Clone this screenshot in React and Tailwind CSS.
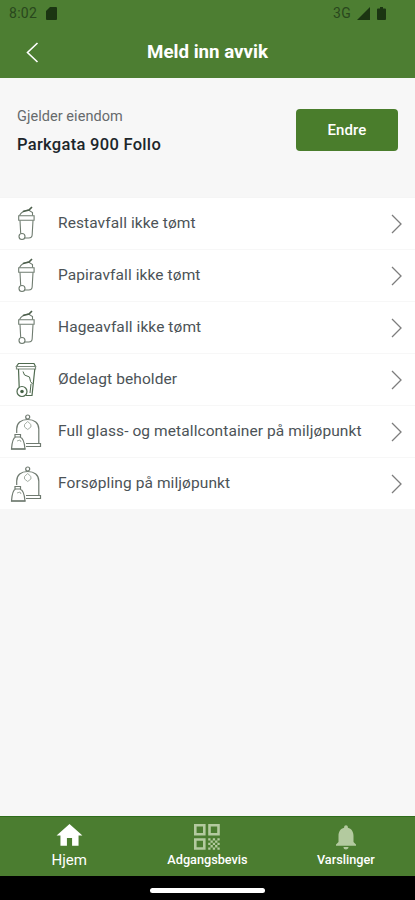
import React, { useState } from "react";
import { MdHome, MdNotifications } from "react-icons/md";

function BinIcon() {
  return (
    <svg width="30" height="36" viewBox="0 0 30 36" fill="none" stroke="#6f7c70" strokeWidth="1.1">
      <path d="M8.5 9.5C10 6.5 13 4.5 17.5 4L21.500 6.500v3" />
      <path d="M12 5.500 18 4 21 1" stroke="#4d5f4c" strokeWidth="1.7" />
      <path d="M7.700 9.700h15.400v4.500H7.700z" />
      <path d="M9 14.500 9.700 27.500M22 14.500l-.8 14a3.500 3.500 0 0 1-3.500 3.500H14" />
      <circle cx="11" cy="30.500" r="3" />
    </svg>
  );
}

function BrokenBinIcon() {
  return (
    <svg width="30" height="36" viewBox="0 0 30 36" fill="none" stroke="#4f6a4f" strokeWidth="1.2">
      <path d="M7.500 1.500h15.500l1.500 3H5.500z" />
      <path d="M5.500 4.500h19v2.500h-19z" stroke="#7d8c7d" />
      <path d="M7.500 7l.7 18M23.800 7 21 33.500h-6" />
      <path d="M12 9.500l1.500 3.500 5 2 1 4.500 2 2.500" strokeWidth="1" />
      <path d="M20 22l-1 9" strokeWidth="1" />
      <circle cx="11" cy="29.500" r="5" />
      <circle cx="11" cy="29.500" r="1.2" fill="#2f4f2f" />
    </svg>
  );
}

function ContainerIcon() {
  return (
    <svg width="36" height="38" viewBox="0 0 36 38" fill="none" stroke="#6f7a70" strokeWidth="1.2">
      <circle cx="19.700" cy="4" r="2" />
      <path d="M8.700 20v-4C8.700 10 13 6.500 19.700 6.500S30.800 10 30.800 16v14" />
      <path d="M18 30.500h14.500v3H18" />
      <path d="M19.700 8.500 16.500 11.500v2.500l3.200 2.500 3.200-2.500v-2.500z" stroke="#9ba59b" strokeWidth="0.9" />
      <path d="M7 21.500h5.500v2.500H7zM7.500 24c-2.500 1-3.500 5-4 12h13.500c-.5-7-2-11-5-12" />
      <path d="M9 28l3-1 1 2" stroke="#9ba59b" strokeWidth="0.9" />
      <path d="M3 36h14.500" strokeWidth="1.4" />
    </svg>
  );
}

function QrIcon() {
  return (
    <svg width="28" height="28" viewBox="0 0 28 28">
      <g fill="none" stroke="#b3ca9f" strokeWidth="2.600">
        <path d="M2.300 2.300h9v9h-9zM16.500 2.300h9v9h-9zM2.300 16.500h9v9h-9z" />
      </g>
      <path
        fill="#b3ca9f"
        d="M15.200 15.200h2.300v2.300h-2.300zM19.800 15.200h2.300v2.300h-2.300zM24.400 15.200h2.300v2.300h-2.300zM17.500 17.500h2.300v2.300h-2.300zM22.100 17.500h2.300v2.300h-2.300zM15.200 19.800h2.300v2.300h-2.300zM19.800 19.800h2.300v2.300h-2.300zM24.400 19.800h2.300v2.300h-2.300zM17.500 22.100h2.300v2.300h-2.300zM22.100 22.100h2.300v2.300h-2.300zM15.200 24.400h2.300v2.300h-2.300zM19.800 24.400h2.300v2.300h-2.300zM24.400 24.400h2.300v2.300h-2.300z"
      />
    </svg>
  );
}

const items = [
  { title: "Restavfall ikke tømt", icon: <BinIcon /> },
  { title: "Papiravfall ikke tømt", icon: <BinIcon /> },
  { title: "Hageavfall ikke tømt", icon: <BinIcon /> },
  { title: "Ødelagt beholder", icon: <BrokenBinIcon /> },
  { title: "Full glass- og metallcontainer på miljøpunkt", icon: <ContainerIcon /> },
  { title: "Forsøpling på miljøpunkt", icon: <ContainerIcon /> },
];

function App() {
  const [activeTab, setActiveTab] = useState("hjem");

  return (
    <div className="flex h-[900px] w-full flex-col bg-[#f7f7f7] font-[Roboto,sans-serif]">
      {/* Status bar and header */}
      <header className="h-[78px] shrink-0 bg-[#4d7e32]">
        <div className="flex h-[27px] items-center justify-between pl-[9px] pr-[29px] text-[#29471d]">
          <div className="flex items-center gap-[9px]">
            <span className="text-[14px] tracking-[0.3px]">8:02</span>
            <svg width="11" height="13" viewBox="0 0 11 13">
              <path d="M4 0h6a1 1 0 0 1 1 1v11a1 1 0 0 1-1 1H1a1 1 0 0 1-1-1V4z" fill="#1b3512" />
            </svg>
          </div>
          <div className="flex items-center">
            <span className="text-[14px] tracking-[0.3px]">3G</span>
            <svg className="ml-1.5" width="13" height="13" viewBox="0 0 13 13">
              <path d="M13 0v13H0z" fill="#1b3512" />
            </svg>
            <svg className="ml-[7px]" width="9" height="13" viewBox="0 0 9 13">
              <path d="M3 0h3v1.500h2a1 1 0 0 1 1 1V12a1 1 0 0 1-1 1H1a1 1 0 0 1-1-1V2.500a1 1 0 0 1 1-1h2z" fill="#1b3512" />
            </svg>
          </div>
        </div>
        <div className="grid h-[51px] grid-cols-[60px_1fr_60px] items-center">
          <button className="pl-[26px]" aria-label="Tilbake">
            <svg width="13" height="21" viewBox="0 0 13 21" fill="none" stroke="#fff" strokeWidth="1.600">
              <path d="M11.500 1 1.500 10.500l10 9.500" />
            </svg>
          </button>
          <h1 className="text-center text-[18.7px] font-bold text-white">Meld inn avvik</h1>
        </div>
      </header>

      {/* Property */}
      <section className="flex h-[119px] shrink-0 items-start justify-between px-[17px] pt-[27px]">
        <div className="pt-px">
          <p className="text-[14.5px] leading-[22px] tracking-[0.05px] text-[#666a6c]">Gjelder eiendom</p>
          <p className="mt-[3px] text-[16.5px] font-medium leading-7 tracking-[0.3px] text-[#1c262b]">Parkgata 900 Follo</p>
        </div>
        <button className="mt-1 h-[42px] w-[102px] rounded-[4px] bg-[#4a7d2c] text-[15px] font-medium tracking-[0.1px] text-white">
          Endre
        </button>
      </section>

      {/* Deviation types */}
      <ul className="shrink-0 border-t border-[#f5f5f5]">
        {items.map((item) => (
          <li key={item.title} className="flex h-[52px] items-center border-b border-[#f7f7f7] bg-white pr-[13px]">
            <div className="flex w-[52px] shrink-0 justify-center">{item.icon}</div>
            <span className="flex-1 whitespace-nowrap pl-[6px] text-[15.5px] tracking-[0.09px] text-[#4c5357]">{item.title}</span>
            <svg width="11" height="20" viewBox="0 0 11 20" fill="none" stroke="#7d7d7d" strokeWidth="1.300">
              <path d="M1 1l9 9-9 9" />
            </svg>
          </li>
        ))}
      </ul>

      {/* Bottom navigation */}
      <nav className="mt-auto grid h-[60px] shrink-0 grid-cols-3 border-t border-[#2f6d1b] bg-[#4b7d30] text-white">
        <button className="flex flex-col items-center pt-[3px]" onClick={() => setActiveTab("hjem")}>
          <MdHome size={31} className={activeTab === "hjem" ? "text-white" : "text-[#b3ca9f]"} />
          <span className="text-[15px] leading-[18px]">Hjem</span>
        </button>
        <button className="flex flex-col items-center pt-[6px]" onClick={() => setActiveTab("adgangsbevis")}>
          <QrIcon />
          <span className="text-[12.7px] font-medium leading-[18px]">Adgangsbevis</span>
        </button>
        <button className="flex flex-col items-center pt-[5px]" onClick={() => setActiveTab("varslinger")}>
          <MdNotifications size={30} className="text-[#b3ca9f]" />
          <span className="text-[12.7px] font-medium leading-[16px]">Varslinger</span>
        </button>
      </nav>
      <div className="flex h-[24px] shrink-0 items-center justify-center bg-black pt-[4px]">
        <div className="h-[5px] w-[115px] rounded-full bg-white"></div>
      </div>
    </div>
  );
}

export default App;
